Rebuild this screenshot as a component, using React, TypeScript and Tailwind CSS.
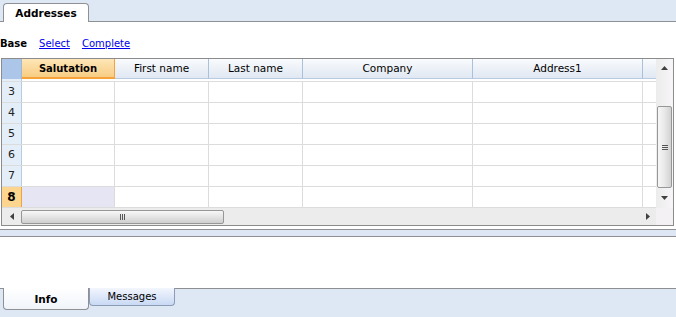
const font = { fontFamily: '"DejaVu Sans", Verdana, sans-serif' }

const cols = [
  { label: "Salutation", w: "w-[93px]" },
  { label: "First name", w: "w-[94px]" },
  { label: "Last name", w: "w-[94px]" },
  { label: "Company", w: "w-[170px]" },
  { label: "Address1", w: "w-[170px]" },
]

const rows = [3, 4, 5, 6, 7, 8]

function UpArrow() {
  return (
    <svg width="7" height="4" viewBox="0 0 7 4">
      <path d="M0 4 L3.5 0 L7 4 Z" fill="#404040" />
    </svg>
  )
}

function DownArrow() {
  return (
    <svg width="7" height="4" viewBox="0 0 7 4">
      <path d="M0 0 L3.5 4 L7 0 Z" fill="#404040" />
    </svg>
  )
}

function LeftArrow() {
  return (
    <svg width="4" height="7" viewBox="0 0 4 7">
      <path d="M4 0 L0 3.5 L4 7 Z" fill="#404040" />
    </svg>
  )
}

function RightArrow() {
  return (
    <svg width="4" height="7" viewBox="0 0 4 7">
      <path d="M0 0 L4 3.5 L0 7 Z" fill="#404040" />
    </svg>
  )
}

export default function App() {
  return (
    <div className="w-[676px] h-[317px] bg-white flex flex-col text-[10px] text-black overflow-hidden" style={font}>
      {/* top tab strip */}
      <div className="h-[22px] bg-[#dde8f4] border-b border-[#8e9094] flex items-end pl-[3px]">
        <div className="w-[86px] h-[19px] -mb-px pt-px bg-white border border-b-0 border-[#8e9094] rounded-t-[4px] flex items-center justify-center font-bold text-[10.5px]">
          Addresses
        </div>
      </div>

      {/* toolbar */}
      <div className="h-[36px] flex items-center gap-[12px] pt-[7px]">
        <span className="font-bold">Base</span>
        <a className="text-[#0000ee] underline cursor-pointer">Select</a>
        <a className="text-[#0000ee] underline cursor-pointer">Complete</a>
      </div>

      {/* grid */}
      <div className="ml-px w-[673px] h-[168px] border border-[#8c8c8c] flex">
        <div className="flex-1 flex flex-col">
          {/* header */}
          <div className="h-[20px] flex bg-gradient-to-b from-[#f9fbfd] to-[#dfe7f2] text-[10.5px]">
            <div className="w-[20px] bg-[#abc6e9] border-r border-[#9fb8d6]" />
            {cols.map((c, i) => (
              <div
                key={c.label}
                className={
                  i === 0
                    ? `${c.w} flex items-center justify-center font-bold text-[10px] bg-gradient-to-b from-[#fde6b6] to-[#f8cd83] border-b-2 border-[#f5a23a] border-r border-r-[#f5a23a]`
                    : `${c.w} flex items-center justify-center border-r border-[#a8c2dd] border-b border-b-[#b8cbe0]`
                }
              >
                {c.label}
              </div>
            ))}
            <div className="flex-1 border-b border-[#b8cbe0]" />
          </div>
          <div className="h-[3px] border-b border-[#dcdcdc] flex">
            <div className="w-[20px] bg-[#e4eef8] border-r border-[#b8cbe0]" />
          </div>

          {/* rows */}
          {rows.map((r) => {
            const sel = r === 8
            return (
              <div key={r} className="h-[21px] flex border-b border-[#dcdcdc]">
                <div
                  className={
                    sel
                      ? "w-[20px] bg-[#fcd68e] border-r border-[#f5a23a] flex items-center justify-center font-bold text-[12px]"
                      : "w-[20px] bg-[#e4eef8] border-r border-[#b8cbe0] flex items-center justify-center text-[11px] text-[#222]"
                  }
                >
                  {r}
                </div>
                {cols.map((c, i) => (
                  <div
                    key={c.label}
                    className={`${c.w} border-r border-[#dcdcdc] ${sel && i === 0 ? "bg-[#e6e5f4]" : ""}`}
                  />
                ))}
                <div className="flex-1" />
              </div>
            )
          })}

          {/* horizontal scrollbar */}
          <div className="flex-1 bg-[#ececec] flex items-center">
            <div className="w-[19px] flex justify-center">
              <LeftArrow />
            </div>
            <div className="w-[203px] h-[14px] rounded-[2px] border border-[#979797] bg-gradient-to-b from-[#f7f7f7] via-[#e4e4e4] to-[#cfcfcf] flex items-center justify-center">
              <div className="flex gap-[1px]">
                <div className="w-px h-[6px] bg-[#555]" />
                <div className="w-px h-[6px] bg-[#555]" />
                <div className="w-px h-[6px] bg-[#555]" />
              </div>
            </div>
            <div className="flex-1 flex justify-end pr-[6px]">
              <RightArrow />
            </div>
          </div>
        </div>

        {/* vertical scrollbar */}
        <div className="w-[17px] flex flex-col">
          <div className="h-[149px] bg-gradient-to-r from-[#ececec] to-[#f7f5f8] flex flex-col items-center">
            <div className="h-[17px] flex items-center justify-center">
              <UpArrow />
            </div>
            <div className="h-[30px]" />
            <div className="w-[15px] h-[82px] rounded-[2px] border border-[#979797] bg-gradient-to-r from-[#f7f7f7] via-[#e8e8e8] to-[#d2d2d2] flex items-center justify-center">
              <div className="flex flex-col gap-[1px]">
                <div className="w-[6px] h-px bg-[#555]" />
                <div className="w-[6px] h-px bg-[#555]" />
                <div className="w-[6px] h-px bg-[#555]" />
              </div>
            </div>
            <div className="flex-1 flex items-center justify-center">
              <DownArrow />
            </div>
          </div>
          <div className="flex-1 bg-[#f3f1f4]" />
        </div>
      </div>

      {/* splitter */}
      <div className="h-[3px]" />
      <div className="h-[8px] bg-[#dde8f4] border-y border-[#8e9094]" />

      {/* info area */}
      <div className="h-[51px] bg-white" />

      {/* bottom tabs */}
      <div className="flex-1 bg-[#dde8f4] border-t border-[#8e9094] flex items-start pl-[3px]">
        <div className="w-[86px] h-[22px] -mt-px pt-[2px] bg-gradient-to-b from-white to-[#f0f4fa] border border-t-0 border-[#8e9094] rounded-b-[4px] flex items-center justify-center font-bold text-[10.5px]">
          Info
        </div>
        <div className="w-[86px] h-[18px] -mt-px bg-gradient-to-b from-[#f3f6fd] to-[#c9d9f4] border border-t-0 border-[#8e9bb5] rounded-b-[4px] flex items-center justify-center">
          Messages
        </div>
      </div>
    </div>
  )
}
